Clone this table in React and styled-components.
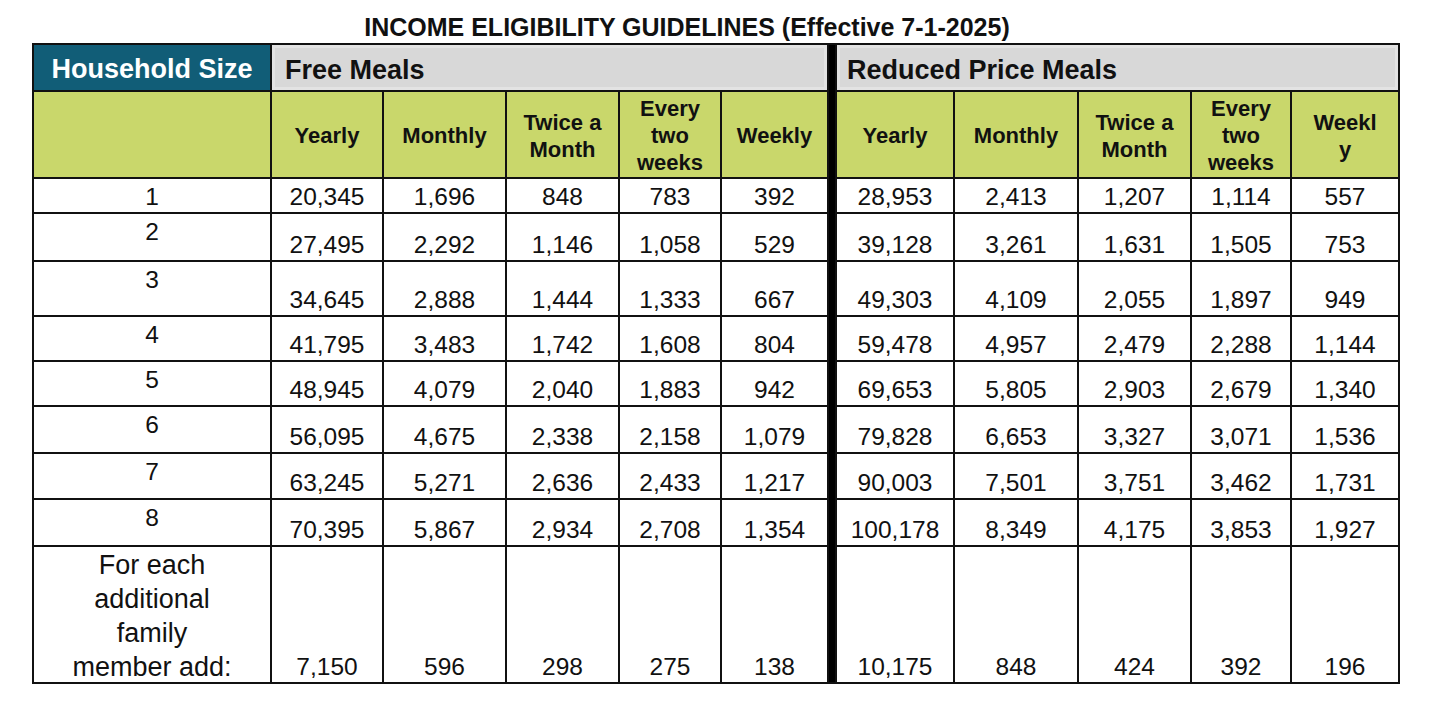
import React from 'react';
import styled, { createGlobalStyle } from 'styled-components';

const GlobalStyle = createGlobalStyle`
    body {
        margin: 0;
        background: #ffffff;
        font-family: "Liberation Sans", Arial, sans-serif;
        color: #111111;
    }
`;

const Page = styled.div`
    width: 1368px;
    padding: 15px 0 0 32px;
`;

const Title = styled.h1`
    margin: 0 0 3px 0;
    padding-right: 58px;
    font-size: 25px;
    line-height: 25px;
    font-weight: 700;
    text-align: center;
    color: #111111;
`;

const Sheet = styled.div`
    display: grid;
    grid-template-columns: 236px 110px 121px 111px 100px 105px 6px 116px 122px 111px 98px 106px;
    grid-template-rows: 45px 85px 33px 46px 53px 43px 43px 45px 44px 45px 135px;
    gap: 2px;
    padding: 2px;
    background: #111111;
    width: max-content;
`;

const Divider = styled.div`
    grid-column: 7;
    grid-row: 1 / -1;
    background: #000000;
`;

const GroupHead = styled.div`
    grid-column: span 5;
    display: flex;
    align-items: center;
    padding: 5px 0 0 ${p => p.$indent}px;
    background: #d8d8d8;
    box-shadow: inset 0 0 0 3px #e3e3e3;
    font-size: 27px;
    font-weight: 700;
    color: #111111;
`;

const SizeHead = styled.div`
    display: flex;
    align-items: center;
    justify-content: center;
    padding-top: 3px;
    background: #115d77;
    color: #ffffff;
    font-size: 27px;
    font-weight: 700;
`;

const ColHead = styled.div`
    display: flex;
    align-items: center;
    justify-content: center;
    padding-top: 2px;
    text-align: center;
    background: #c9d76b;
    font-size: 22px;
    line-height: 27px;
    font-weight: 700;
    color: #111111;
`;

const Cell = styled.div`
    display: flex;
    justify-content: center;
    align-items: ${p => (p.$top ? 'flex-start' : 'flex-end')};
    padding-top: ${p => (p.$top ? 1 : 0)}px;
    text-align: center;
    background: #ffffff;
    font-size: ${p => (p.$label ? 27 : 24.5)}px;
    line-height: ${p => (p.$top ? 34 : 30)}px;
    color: #111111;
`;

const periods = [
    'Yearly',
    'Monthly',
    <>Twice a<br />Month</>,
    <>Every<br />two<br />weeks</>,
];

const rows = [
    ['1', ['20,345', '1,696', '848', '783', '392'], ['28,953', '2,413', '1,207', '1,114', '557']],
    ['2', ['27,495', '2,292', '1,146', '1,058', '529'], ['39,128', '3,261', '1,631', '1,505', '753']],
    ['3', ['34,645', '2,888', '1,444', '1,333', '667'], ['49,303', '4,109', '2,055', '1,897', '949']],
    ['4', ['41,795', '3,483', '1,742', '1,608', '804'], ['59,478', '4,957', '2,479', '2,288', '1,144']],
    ['5', ['48,945', '4,079', '2,040', '1,883', '942'], ['69,653', '5,805', '2,903', '2,679', '1,340']],
    ['6', ['56,095', '4,675', '2,338', '2,158', '1,079'], ['79,828', '6,653', '3,327', '3,071', '1,536']],
    ['7', ['63,245', '5,271', '2,636', '2,433', '1,217'], ['90,003', '7,501', '3,751', '3,462', '1,731']],
    ['8', ['70,395', '5,867', '2,934', '2,708', '1,354'], ['100,178', '8,349', '4,175', '3,853', '1,927']],
    [
        <>For each<br />additional<br />family<br />member add:</>,
        ['7,150', '596', '298', '275', '138'],
        ['10,175', '848', '424', '392', '196'],
    ],
];

const App = () => (
    <Page>
        <GlobalStyle />
        <Title>INCOME ELIGIBILITY GUIDELINES (Effective 7-1-2025)</Title>
        <Sheet>
            <Divider />

            <SizeHead>Household Size</SizeHead>
            <GroupHead $indent={13}>Free Meals</GroupHead>
            <GroupHead $indent={10}>Reduced Price Meals</GroupHead>

            <ColHead />
            {periods.map((p, i) => <ColHead key={'f' + i}>{p}</ColHead>)}
            <ColHead>Weekly</ColHead>
            {periods.map((p, i) => <ColHead key={'r' + i}>{p}</ColHead>)}
            <ColHead>Weekl<br />y</ColHead>

            {rows.map(([size, free, reduced], r) => (
                <React.Fragment key={r}>
                    <Cell $top $label={typeof size !== 'string'}>{size}</Cell>
                    {free.map((v, i) => <Cell key={'f' + i}>{v}</Cell>)}
                    {reduced.map((v, i) => <Cell key={'r' + i}>{v}</Cell>)}
                </React.Fragment>
            ))}
        </Sheet>
    </Page>
);

export default App;
